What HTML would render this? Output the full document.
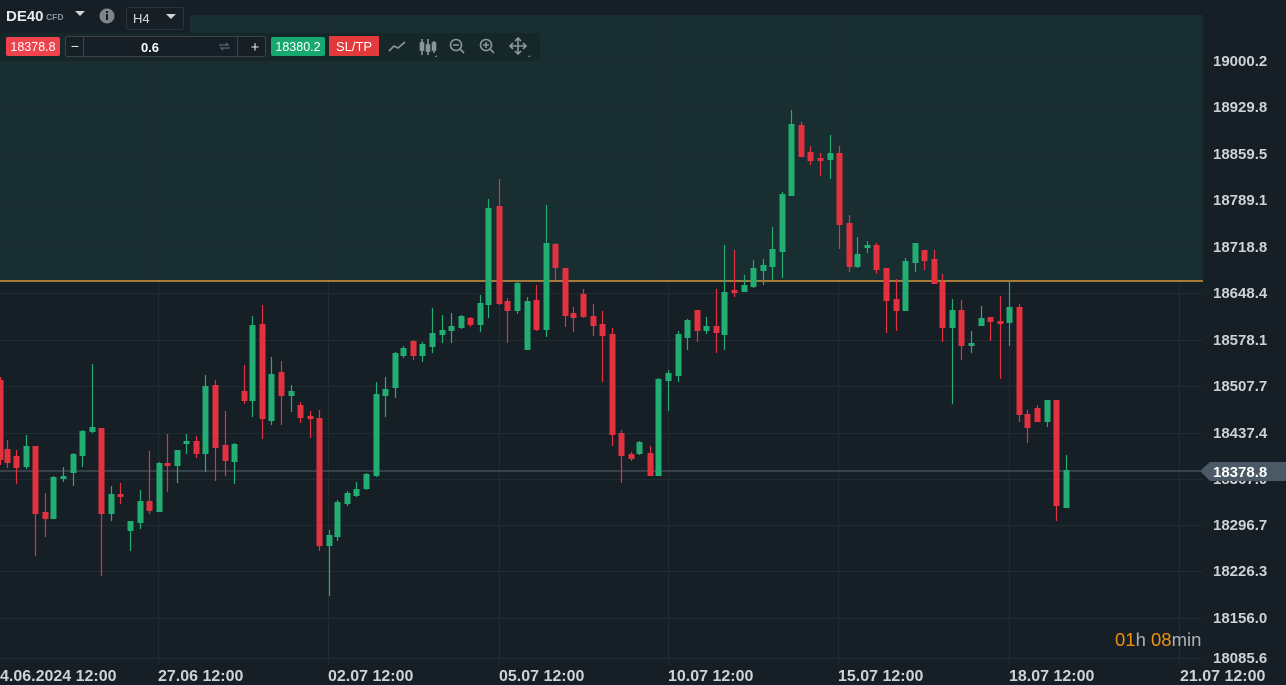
<!DOCTYPE html>
<html><head><meta charset="utf-8"><style>
html,body{margin:0;padding:0;background:#171f26;width:1286px;height:685px;overflow:hidden;font-family:"Liberation Sans",sans-serif}
svg{position:absolute;left:0;top:0}
.t{font-family:"Liberation Sans",sans-serif}
</style></head><body>
<svg id="s" width="1286" height="685" xmlns="http://www.w3.org/2000/svg">
<rect x="0" y="0" width="1286" height="685" fill="#171f26"/>
<rect x="0" y="15" width="1203" height="266" fill="#182e30"/>
<g id="grid" stroke="#1f2c31" stroke-width="1"></g>
<line x1="0" y1="281" x2="1203" y2="281" stroke="#d2953a" stroke-width="1.5"/>
<line x1="0" y1="471" x2="1203" y2="471" stroke="#55606a" stroke-width="1"/>
<g id="candles"></g>
<rect x="0" y="0" width="190" height="33" fill="#171f26"/>
<rect x="0" y="33" width="540" height="28" fill="#16272a"/>
<text x="6" y="21" fill="#e8eaec" font-size="15" font-weight="bold" class="t">DE40</text>
<text x="46" y="20" fill="#8a949b" font-size="8.5" font-weight="bold" class="t">CFD</text>
<path d="M75 11 L85 11 L80 16 Z" fill="#d0d4d8"/>
<circle cx="107" cy="16" r="7.5" fill="#7e868c"/>
<rect x="106" y="14" width="2" height="6" fill="#171f26"/><rect x="106" y="11" width="2" height="2" fill="#171f26"/>
<rect x="126.5" y="7.5" width="57" height="22" rx="2" fill="none" stroke="#2a343a"/>
<text x="133" y="23" fill="#d8dcdf" font-size="13" class="t">H4</text>
<path d="M166 14 L176 14 L171 19 Z" fill="#d0d4d8"/>
<rect x="6" y="37" width="54" height="19" rx="2" fill="#f0424c"/>
<text x="33" y="51" fill="#fff" font-size="12.5" text-anchor="middle" class="t">18378.8</text>
<rect x="65.5" y="36.5" width="200" height="20" rx="2" fill="#171f26" stroke="#3a444a"/>
<line x1="83.5" y1="37" x2="83.5" y2="56" stroke="#3a444a"/>
<line x1="237.5" y1="37" x2="237.5" y2="56" stroke="#3a444a"/>
<text x="75" y="51" fill="#e8eaec" font-size="14" text-anchor="middle" class="t">−</text>
<text x="150" y="52" fill="#fff" font-size="13" font-weight="bold" text-anchor="middle" class="t">0.6</text>
<path d="M219 45 h9 l-2 -2 M230 48 h-9 l2 2" stroke="#5a646a" stroke-width="1.3" fill="none"/>
<text x="255" y="52" fill="#e8eaec" font-size="15" text-anchor="middle" class="t">+</text>
<rect x="271" y="37" width="54" height="19" rx="2" fill="#17a870"/>
<text x="298" y="51" fill="#fff" font-size="12.5" text-anchor="middle" class="t">18380.2</text>
<rect x="329" y="36" width="50" height="20" fill="#e23a3c"/>
<text x="354" y="51" fill="#fff" font-size="13" text-anchor="middle" class="t">SL/TP</text>
<g stroke="#8b959d" stroke-width="1.6" fill="none">
<path d="M389 51 L394 46 L398 48 L405 42"/>
<path d="M422 39 v16 M428 39 v16 M434 41 v12"/>
<rect x="420.5" y="43" width="3" height="7" fill="#8b959d"/><rect x="426.5" y="45" width="3" height="6" fill="#8b959d"/><rect x="432.5" y="43" width="3" height="7" fill="#8b959d"/>
<circle cx="456" cy="45" r="5.5"/><path d="M460 49 l4 4 M453 45 h6"/>
<circle cx="486" cy="45" r="5.5"/><path d="M490 49 l4 4 M483 45 h6 M486 42 v6"/>
<path d="M518 38 v16 M510 46 h16 M515 41 l3 -3 l3 3 M515 51 l3 3 l3 -3 M513 43 l-3 3 l3 3 M523 43 l3 3 l-3 3"/>
</g>
<path d="M435 57 l2 -2 v2z M528 57 l2 -2 v2z" fill="#8b959d"/>
<g id="axis" class="t" font-size="15" font-weight="bold" fill="#cfd3d7"></g>
<g id="dates" class="t" font-size="16" font-weight="bold" fill="#cfd3d7"></g>
<text x="1213" y="484" fill="#cfd3d7" font-size="15" font-weight="bold" class="t">18367.0</text>
<path d="M1200 471 L1210 462 L1286 462 L1286 481 L1210 481 Z" fill="#4a5965"/>
<text x="1213" y="477" fill="#fff" font-size="15" font-weight="bold" class="t">18378.8</text>
<text x="1115" y="646" font-size="18.5" class="t"><tspan fill="#f0900f">01</tspan><tspan fill="#aab2b8">h </tspan><tspan fill="#f0900f">08</tspan><tspan fill="#aab2b8">min</tspan></text>
</svg>
<script>
var NS="http://www.w3.org/2000/svg";
function el(p,n,a,txt){var e=document.createElementNS(NS,n);for(var k in a)e.setAttribute(k,a[k]);if(txt)e.textContent=txt;document.getElementById(p).appendChild(e);return e;}
var gy=[61,107,154,200,247,293,340,386,433,479,525,571,618,658];
gy.forEach(function(y){el("grid","line",{x1:0,y1:y+.5,x2:1203,y2:y+.5});});
[158,328,499,668,838,1009,1179].forEach(function(x){el("grid","line",{x1:x+.5,y1:15,x2:x+.5,y2:665});});
var lab=["19000.2","18929.8","18859.5","18789.1","18718.8","18648.4","18578.1","18507.7","18437.4","","18296.7","18226.3","18156.0","18085.6"];
gy.forEach(function(y,i){if(lab[i])el("axis","text",{x:1213,y:y+5},lab[i]);});
[[0,"4.06.2024 12:00"],[158,"27.06 12:00"],[328,"02.07 12:00"],[499,"05.07 12:00"],[668,"10.07 12:00"],[838,"15.07 12:00"],[1009,"18.07 12:00"],[1180,"21.07 12:00"]].forEach(function(d){el("dates","text",{x:d[0],y:681},d[1]);});
var C=[
[0,380,460,377,465,'r'],[7,449,463,440,468,'r'],[16,456,468,450,484,'r'],[26,446,467,435,469,'g'],[35,446,514,446,556,'r'],
[45,512,519,493,537,'r'],[53,477,519,476,519,'g'],[63,476,479,467,482,'g'],[73,454,473,453,486,'g'],[82,431,456,430,467,'g'],
[92,427,432,364,433,'g'],[101,428,514,428,576,'r'],[111,494,514,486,521,'g'],[120,494,497,483,504,'r'],[130,521,531,521,551,'g'],
[140,501,523,490,529,'g'],[149,501,511,451,514,'r'],[159,463,512,462,512,'g'],[167,463,466,434,492,'r'],[177,450,466,450,483,'g'],
[186,441,444,434,454,'g'],[196,441,454,436,458,'r'],[205,386,454,375,472,'g'],[215,385,448,380,481,'r'],[225,445,461,411,476,'r'],
[234,444,462,443,484,'g'],[244,391,401,365,404,'r'],[252,325,401,316,417,'g'],[262,324,419,305,439,'r'],[271,374,421,357,425,'g'],
[281,372,396,361,425,'r'],[291,391,396,385,412,'g'],[300,405,418,402,423,'r'],[310,416,419,411,438,'r'],[319,418,546,410,551,'r'],
[329,535,546,530,596,'g'],[337,502,537,500,541,'g'],[347,493,504,491,506,'g'],[356,489,496,482,497,'g'],[366,474,489,473,490,'g'],
[376,394,476,382,477,'g'],[385,389,396,377,417,'g'],[395,353,388,352,398,'g'],[403,348,356,346,358,'g'],[413,341,356,340,360,'r'],
[422,344,356,342,362,'g'],[432,333,347,308,353,'g'],[442,330,335,315,343,'g'],[451,326,331,313,343,'g'],[461,316,328,315,329,'g'],
[470,318,325,317,327,'r'],[480,303,325,295,332,'g'],[488,208,305,199,318,'g'],[499,206,304,179,305,'r'],[507,301,311,298,343,'r'],
[517,283,311,280,314,'g'],[527,301,350,297,350,'g'],[536,300,330,285,331,'r'],[546,243,330,205,337,'g'],[555,244,268,243,280,'r'],
[565,268,316,268,327,'r'],[573,313,318,307,332,'r'],[583,294,317,289,318,'r'],[593,316,326,304,336,'r'],[602,324,336,311,382,'r'],
[612,334,435,328,446,'r'],[621,433,456,430,483,'r'],[631,454,459,452,461,'r'],[639,442,454,441,455,'g'],[650,453,476,446,476,'r'],
[658,379,476,378,476,'g'],[668,373,381,370,411,'g'],[678,334,376,331,382,'g'],[687,320,338,319,350,'g'],[697,310,331,310,342,'r'],
[706,326,331,317,334,'g'],[716,326,333,289,353,'r'],[724,292,335,245,350,'g'],[734,290,293,250,297,'r'],[744,285,292,275,292,'g'],
[753,268,287,260,288,'g'],[763,265,271,259,285,'g'],[772,249,267,227,280,'g'],[782,194,252,192,278,'g'],[791,124,196,110,196,'g'],
[801,125,157,122,157,'r'],[810,152,161,146,165,'r'],[820,158,161,153,176,'r'],[830,153,160,135,179,'g'],[839,153,225,146,249,'r'],
[849,223,267,215,272,'r'],[857,254,267,237,268,'g'],[867,245,248,241,253,'g'],[876,245,270,243,274,'r'],[886,268,301,268,333,'r'],
[896,299,311,279,331,'r'],[905,261,311,258,311,'g'],[915,243,263,243,272,'g'],[924,250,261,250,270,'r'],[934,259,284,250,284,'r'],
[942,282,328,274,342,'r'],[952,310,328,299,404,'g'],[961,310,346,300,360,'r'],[971,343,346,331,353,'g'],[981,318,326,306,326,'g'],
[990,317,322,317,341,'r'],[1000,321,324,296,379,'r'],[1009,307,323,281,346,'g'],[1019,307,415,304,422,'r'],[1027,414,428,410,443,'r'],
[1037,408,422,405,422,'r'],[1047,400,422,400,427,'g'],[1056,400,506,400,521,'r'],[1066,470,508,455,508,'g']
];
C.forEach(function(c){var col=c[5]=='g'?'#22ad72':'#e3323f';
el("candles","line",{x1:c[0]+.5,y1:c[3],x2:c[0]+.5,y2:c[4],stroke:col,"stroke-width":1.2});
el("candles","rect",{x:c[0]-2.5,y:c[1],width:6,height:Math.max(2,c[2]-c[1]),fill:col});});
</script>
</body></html>
